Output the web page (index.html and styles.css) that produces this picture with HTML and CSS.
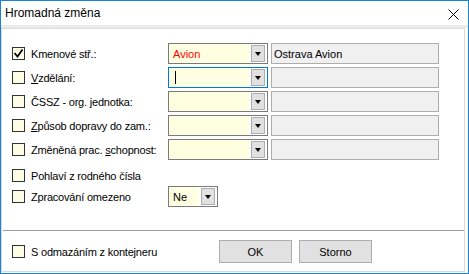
FILE: index.html
```html
<!DOCTYPE html>
<html lang="cs">
<head>
  <meta charset="UTF-8" />
  <title>Hromadná změna</title>
  <link rel="stylesheet" href="styles.css">
</head>
<body>
  <div class="window">
    <div class="titlebar">
      <span class="title">Hromadná změna</span>
      <svg class="close" width="11" height="11" viewBox="0 0 11 11">
        <path d="M0.5 0.5 L10.5 10.5 M10.5 0.5 L0.5 10.5" stroke="#000" stroke-width="1" fill="none"/>
      </svg>
    </div>

    <div class="body">
      <div class="panel">
        <div class="fields">
          <div class="row">
            <label class="check">
              <span class="box">
                <svg width="11" height="11" viewBox="0 0 11 11"><polyline points="1.5,5 4.5,8.5 9.5,1.5" stroke="#000" stroke-width="1.8" fill="none"/></svg>
              </span>
              Kmenové stř.:
            </label>
            <div class="combo"><span class="value red">Avion</span><span class="drop"></span></div>
            <div class="readonly">Ostrava Avion</div>
          </div>

          <div class="row">
            <label class="check"><span class="box"></span><span><u>V</u>zdělání:</span></label>
            <div class="combo focused"><span class="value"><span class="caret"></span></span><span class="drop"></span></div>
            <div class="readonly"></div>
          </div>

          <div class="row">
            <label class="check"><span class="box"></span>ČSSZ - org. jednotka:</label>
            <div class="combo"><span class="value"></span><span class="drop"></span></div>
            <div class="readonly"></div>
          </div>

          <div class="row">
            <label class="check"><span class="box"></span><span><u>Z</u>působ dopravy do zam.:</span></label>
            <div class="combo"><span class="value"></span><span class="drop"></span></div>
            <div class="readonly"></div>
          </div>

          <div class="row row-last">
            <label class="check"><span class="box"></span><span>Změněná prac. <u>s</u>chopnost:</span></label>
            <div class="combo"><span class="value"></span><span class="drop"></span></div>
            <div class="readonly"></div>
          </div>

          <div class="row row-tight">
            <label class="check"><span class="box"></span>Pohlaví z rodného čísla</label>
          </div>

          <div class="row">
            <label class="check"><span class="box"></span>Zpracování omezeno</label>
            <div class="combo small"><span class="value">Ne</span><span class="drop"></span></div>
          </div>
        </div>

        <div class="separator"></div>

        <div class="footer">
          <label class="check wide"><span class="box"></span>S odmazáním z kontejneru</label>
          <button class="btn">OK</button>
          <button class="btn">Storno</button>
        </div>
      </div>
    </div>
  </div>
</body>
</html>
```

FILE: styles.css
```css
body {
  margin: 0;
  font-family: "Liberation Sans", Arial, sans-serif;
  font-size: 11px;
  color: #000;
  background: #fff;
}
.window {
  width: 469px;
  height: 274px;
  box-sizing: border-box;
  border: 1px solid #1883d7;
  background: #fff;
  display: flex;
  flex-direction: column;
}
.titlebar {
  height: 24px;
  display: flex;
  align-items: center;
  padding-left: 4px;
}
.title {
  font-size: 12px;
  flex: 1;
}
.close {
  margin-right: 9px;
  margin-top: 2px;
}
.body {
  flex: 1;
  display: flex;
  border-top: 3px solid #ebebeb;
}
.panel {
  flex: 1;
  border: 1px solid #dadada;
  margin: 0 3px 1px 0;
  padding-top: 14px;
}
.fields {
  padding-left: 10px;
}
.row {
  display: flex;
  align-items: center;
  height: 21px;
  margin-bottom: 3px;
}
.row-last {
  margin-bottom: 5px;
}
.row-tight {
  margin-bottom: 0;
}
.check {
  width: 156px;
  display: flex;
  align-items: center;
  gap: 6px;
  white-space: nowrap;
  letter-spacing: -0.2px;
}
.check.wide {
  width: 207px;
}
.box {
  width: 13px;
  height: 13px;
  box-sizing: border-box;
  border: 1px solid #333;
  background: #fdfde6;
  display: flex;
  align-items: center;
  justify-content: center;
  flex-shrink: 0;
}
.combo {
  width: 100px;
  height: 21px;
  box-sizing: border-box;
  border: 1px solid #7a7a7a;
  background: #fff;
  display: flex;
}
.combo.focused {
  border-color: #0078d7;
}
.combo.small {
  width: 50px;
}
.value {
  flex: 1;
  background: #ffffe1;
  padding-left: 4px;
  display: flex;
  align-items: center;
}
.red {
  color: #f00;
}
.caret {
  width: 1px;
  height: 13px;
  margin-left: 2px;
  background: #000;
}
.drop {
  width: 14px;
  height: 17px;
  box-sizing: border-box;
  margin: 1px 2px;
  background: #e1e1e1;
  border: 1px solid #adadad;
  display: flex;
  align-items: center;
  justify-content: center;
}
.drop::after {
  content: "";
  border-left: 3.5px solid transparent;
  border-right: 3.5px solid transparent;
  border-top: 4px solid #000;
  margin-top: 1px;
}
.readonly {
  width: 168px;
  height: 21px;
  box-sizing: border-box;
  margin-left: 3px;
  border: 1px solid #adadad;
  background: #f0f0f0;
  padding-left: 2px;
  display: flex;
  align-items: center;
}
.separator {
  height: 1px;
  background: #a0a0a0;
  margin: 23px 0 0 1px;
}
.footer {
  display: flex;
  align-items: center;
  padding: 9px 0 0 10px;
}
.btn {
  width: 73px;
  height: 23px;
  margin: 0 7px 0 0;
  padding: 0;
  font-family: "Liberation Sans", Arial, sans-serif;
  font-size: 11px;
  color: #000;
  background: #e1e1e1;
  border: 1px solid #adadad;
}
```
